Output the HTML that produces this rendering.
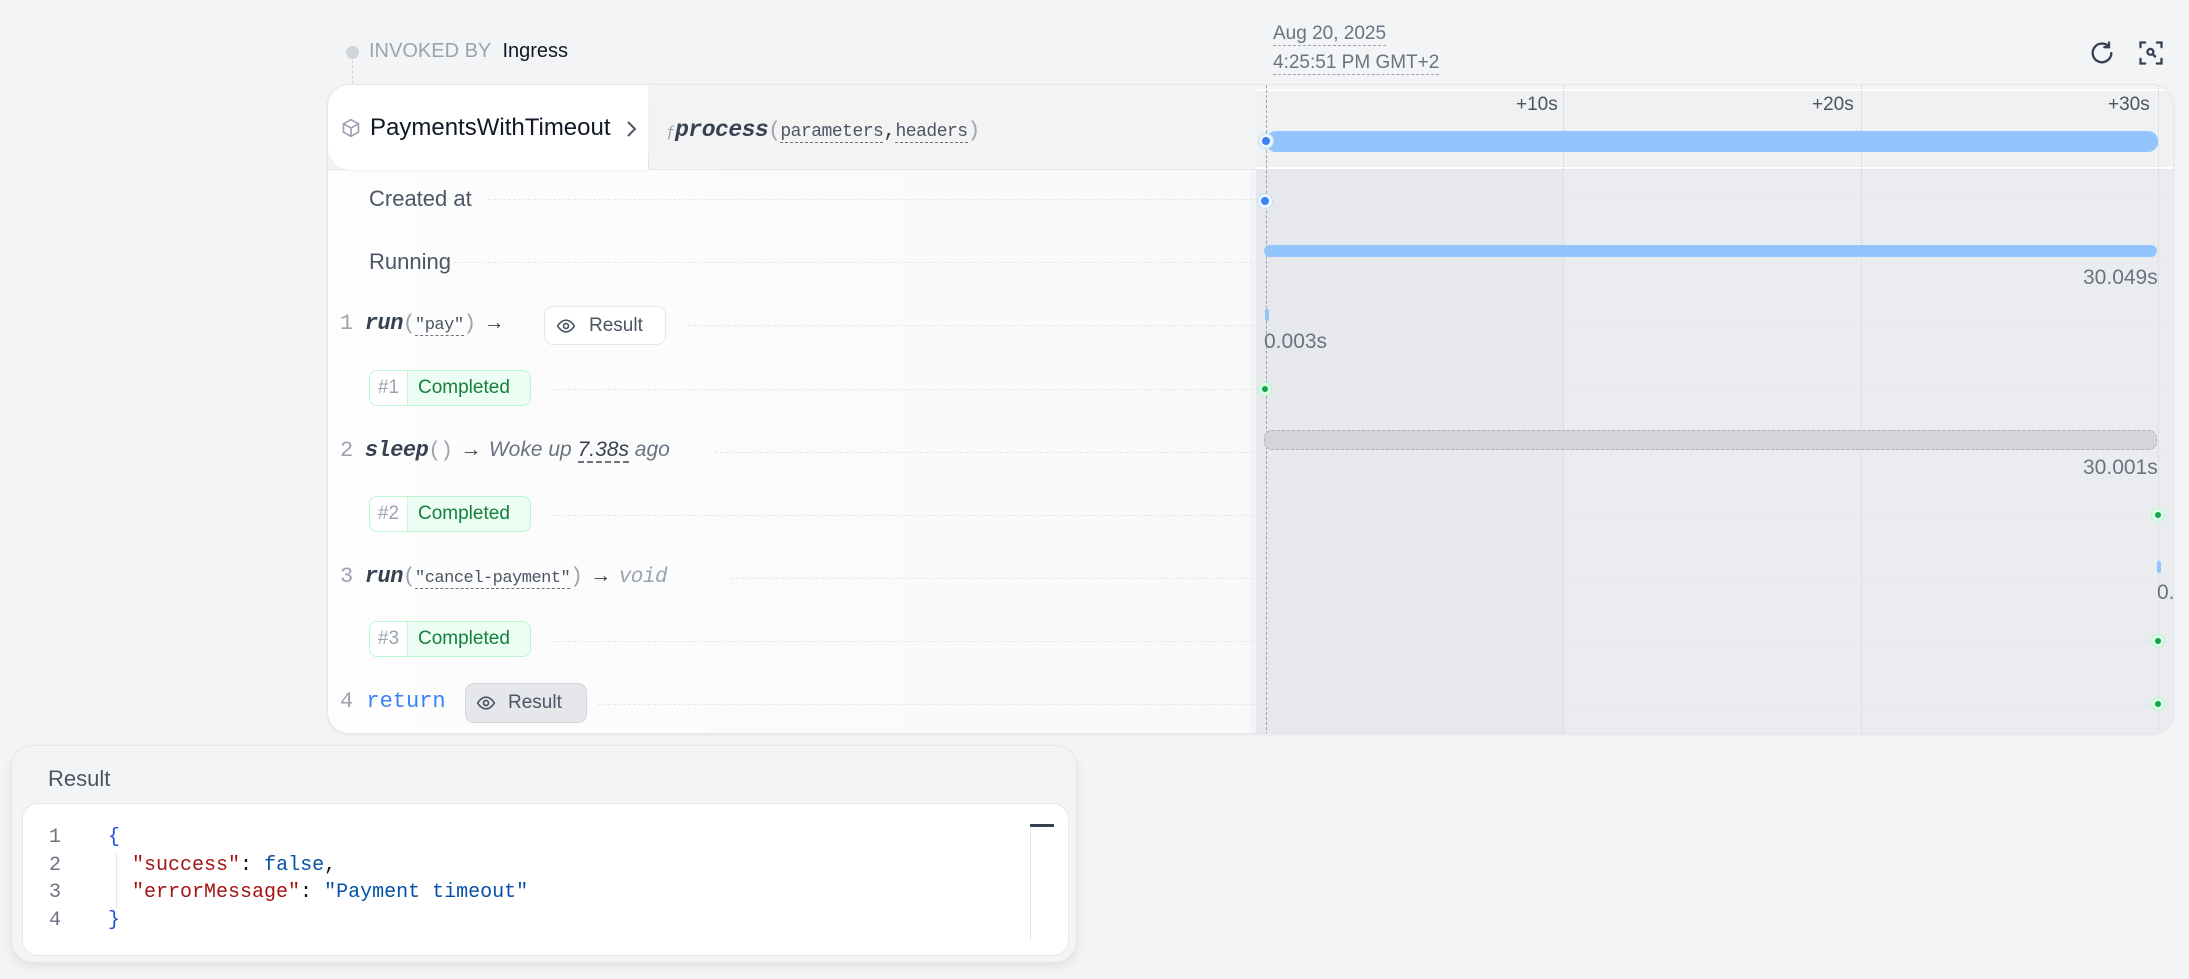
<!DOCTYPE html>
<html><head><meta charset="utf-8"><style>
*{box-sizing:border-box;margin:0;padding:0}
body{width:2189px;height:979px;background:#f3f4f6;font-family:"Liberation Sans",sans-serif;position:relative;overflow:hidden;color:#374151}
.a{position:absolute;white-space:nowrap}
.mono{font-family:"Liberation Mono",monospace}
.row{position:absolute;left:0;right:0;height:1px;border-top:1px dashed #e5e7eb}
.badge{position:absolute;left:369px;height:36px;width:162px;border:1px solid #bbf7d0;border-radius:8px;background:#ecfdf3;overflow:hidden;font-size:19px}
.badge .n{position:absolute;left:0;top:0;bottom:0;width:38px;background:#fff;border-right:1px solid #e5e7eb;color:#9ca3af;text-align:center;line-height:34px}
.badge .t{position:absolute;left:48px;line-height:34px;color:#15803d}
.ln{color:#9ca3af;font-size:22px}
.dot{position:absolute;width:16px;height:16px;border-radius:50%;border:1px solid #bfdbfe;background:#fff;box-shadow:inset 0 0 0 3px #eff6ff}
.dot::after{content:"";position:absolute;left:3px;top:3px;width:8px;height:8px;border-radius:50%;background:#3b82f6}
.gdot{position:absolute;width:14px;height:14px;border-radius:50%;border:1px solid #bbf7d0;background:#dcfce7}
.gdot::after{content:"";position:absolute;left:3px;top:3px;width:6px;height:6px;border-radius:50%;background:#16a34a}
.vg{position:absolute;top:0;height:650px;border-left:1px dotted #cfd1d6}
</style></head><body>
<div class="a" style="left:346px;top:46px;width:13px;height:13px;border-radius:50%;background:#d1d5db"></div>
<div class="a" style="left:352px;top:60px;height:24px;border-left:1px dashed #d1d5db"></div>
<div class="a" style="left:369px;top:40px;font-size:20px;color:#9ca3af">INVOKED BY <span style="color:#111827;margin-left:6px">Ingress</span></div>
<div class="a" style="left:1273px;top:23px;font-size:19px;color:#6b7280;border-bottom:1px dashed #9ca3af;line-height:22px">Aug 20, 2025</div>
<div class="a" style="left:1273px;top:52px;font-size:19px;color:#6b7280;border-bottom:1px dashed #9ca3af;line-height:22px">4:25:51 PM GMT+2</div>
<svg class="a" style="left:2088px;top:39px" width="28" height="28" viewBox="0 0 24 24" fill="none" stroke="#374151" stroke-width="2" stroke-linecap="round"><path d="M20 12a8 8 0 1 1-2.3-5.7"/><path d="M18 3v4h-4"/></svg>
<svg class="a" style="left:2137px;top:39px" width="28" height="28" viewBox="0 0 24 24" fill="none" stroke="#374151" stroke-width="2" stroke-linecap="round"><path d="M3 7V3h4M17 3h4v4M21 17v4h-4M7 21H3v-4"/><circle cx="11.5" cy="11" r="2.5"/><path d="M13.5 13l2 2"/></svg>

<div class="a" style="left:327px;top:84px;width:1847px;height:650px;border-radius:22px;background:#fff;border:1px solid #e5e7eb;overflow:hidden;box-shadow:0 1px 3px rgba(0,0,0,.06)">
  <div class="a" style="left:0;top:85px;width:922px;height:565px;background:linear-gradient(90deg,#fdfdfd,#f8f9fa)"></div>
  <div class="a" style="left:922px;top:0;width:6px;height:650px;background:#f3f4f6"></div>
  <div class="a" style="left:928px;top:0;width:307px;height:650px;background:#e7e8ec"></div>
  <div class="a" style="left:1235px;top:0;width:612px;height:650px;background:#ebecf0"></div>
  <div class="a" style="left:0;top:0;width:1847px;height:85px;background:#f3f4f6;border-bottom:1px solid #e5e7eb"></div>
  <div class="a" style="left:928px;top:4px;width:919px;height:80px;background:#f0f1f3;border-top:2px solid #fff;border-bottom:2px solid #fff"></div>
  <div class="vg" style="left:1235px"></div>
  <div class="vg" style="left:1533px"></div>
  <div class="vg" style="left:1830px"></div>
  <div class="a" style="left:0;top:0;width:320px;height:85px;background:#fff;border-radius:22px 0 0 22px;box-shadow:0 1px 2px rgba(0,0,0,.05)"></div>
  <div class="a" style="left:320px;top:4px;width:602px;height:80px;background:#f3f3f4;clip-path:polygon(4px 0,100% 0,100% 100%,0 100%);border-left:1px solid #ddd"></div>
  <svg class="a" style="left:13px;top:32px" width="20" height="22" viewBox="0 0 24 24" fill="none" stroke="#9ca3af" stroke-width="2"><path d="M12 2l9 5v10l-9 5-9-5V7z"/><path d="M3 7l9 5 9-5M12 12v10"/></svg>
  <div class="a" style="left:42px;top:29px;font-size:24px;color:#111827">PaymentsWithTimeout</div>
  <svg class="a" style="left:296px;top:34px" width="14" height="20" viewBox="0 0 14 20" fill="none" stroke="#4b5563" stroke-width="2"><path d="M4 3l7 7-7 7"/></svg>
  <div class="a mono" style="left:338px;top:32px;font-size:21px;color:#374151;letter-spacing:-0.5px"><span style="color:#9ca3af;font-size:16px">ƒ</span><i style="font-weight:bold;font-size:23px">process</i><span style="color:#9ca3af">(</span><span style="font-size:18px;color:#4b5563;border-bottom:1px dashed #6b7280">parameters</span>,<span style="font-size:18px;color:#4b5563;border-bottom:1px dashed #6b7280">headers</span><span style="color:#9ca3af">)</span></div>
  <div class="a" style="left:1188px;top:9px;font-size:19px;color:#4b5563">+10s</div>
  <div class="a" style="left:1484px;top:9px;font-size:19px;color:#4b5563">+20s</div>
  <div class="a" style="left:1780px;top:9px;font-size:19px;color:#4b5563">+30s</div>
  <div class="a" style="left:938px;top:46px;width:892px;height:21px;border-radius:10px;background:#93c5fd"></div>
  <div class="row" style="top:114px;left:160px"></div>
  <div class="row" style="top:177px;left:125px"></div>
  <div class="row" style="top:240px;left:360px"></div>
  <div class="row" style="top:304px;left:225px"></div>
  <div class="row" style="top:367px;left:387px"></div>
  <div class="row" style="top:430px;left:225px"></div>
  <div class="row" style="top:493px;left:403px"></div>
  <div class="row" style="top:556px;left:225px"></div>
  <div class="row" style="top:619px;left:270px"></div>
  <div class="a" style="left:938px;top:0;height:650px;border-left:1px dashed #9ca3af"></div>
  <div class="dot" style="left:930px;top:48px"></div>
</div>
<div class="a" style="left:369px;top:186px;font-size:22px;color:#4b5563">Created at</div>
<div class="a" style="left:369px;top:249px;font-size:22px;color:#4b5563">Running</div>
<div class="a mono" style="left:340px;top:311px;font-size:21px;letter-spacing:-0.5px"><span class="ln">1</span> <i style="font-weight:bold;color:#374151;font-size:22px">run</i><span style="color:#9ca3af">(</span><span style="font-size:17px;color:#4b5563;border-bottom:1px dashed #6b7280">"pay"</span><span style="color:#9ca3af">)</span> →</div>
<div class="a" style="left:544px;top:306px;width:122px;height:39px;border:1px solid #e5e7eb;border-radius:9px;background:#fff;font-size:19px;color:#4b5563;line-height:37px;padding-left:44px">Result</div>
<svg class="a" style="left:556px;top:316px" width="20" height="20" viewBox="0 0 24 24" fill="none" stroke="#4b5563" stroke-width="2"><path d="M2 12s4-7 10-7 10 7 10 7-4 7-10 7S2 12 2 12z"/><circle cx="12" cy="12" r="3"/></svg>
<div class="badge" style="top:370px"><span class="n">#1</span><span class="t">Completed</span></div>
<div class="a mono" style="left:340px;top:438px;font-size:21px;letter-spacing:-0.5px"><span class="ln">2</span> <i style="font-weight:bold;color:#374151;font-size:22px">sleep</i><span style="color:#9ca3af">()</span> → <i style="font-family:'Liberation Sans';color:#6b7280;letter-spacing:0">Woke up <b style="color:#374151;border-bottom:2px dashed #6b7280;font-weight:normal">7.38s</b> ago</i></div>
<div class="badge" style="top:496px"><span class="n">#2</span><span class="t">Completed</span></div>
<div class="a mono" style="left:340px;top:564px;font-size:21px;letter-spacing:-0.5px"><span class="ln">3</span> <i style="font-weight:bold;color:#374151;font-size:22px">run</i><span style="color:#9ca3af">(</span><span style="font-size:17px;color:#4b5563;border-bottom:1px dashed #6b7280">"cancel-payment"</span><span style="color:#9ca3af">)</span> → <i style="color:#9ca3af">void</i></div>
<div class="badge" style="top:621px"><span class="n">#3</span><span class="t">Completed</span></div>
<div class="a mono" style="left:340px;top:689px;font-size:22px"><span class="ln">4</span> <span style="color:#3b82f6">return</span></div>
<div class="a" style="left:465px;top:683px;width:122px;height:40px;border:1px solid #d1d5db;border-radius:9px;background:#e5e7eb;font-size:19px;color:#4b5563;line-height:38px;padding-left:42px">Result</div>
<svg class="a" style="left:476px;top:693px" width="20" height="20" viewBox="0 0 24 24" fill="none" stroke="#4b5563" stroke-width="2"><path d="M2 12s4-7 10-7 10 7 10 7-4 7-10 7S2 12 2 12z"/><circle cx="12" cy="12" r="3"/></svg>
<div class="dot" style="left:1257px;top:193px"></div>
<div class="a" style="left:1264px;top:245px;width:893px;height:12px;border-radius:6px;background:#93c5fd"></div>
<div class="a" style="left:2083px;top:266px;font-size:21px;color:#6b7280">30.049s</div>
<div class="a" style="left:1265px;top:309px;width:4px;height:12px;border-radius:2px;background:#93c5fd"></div>
<div class="a" style="left:1264px;top:330px;font-size:21px;color:#6b7280">0.003s</div>
<div class="gdot" style="left:1258px;top:382px"></div>
<div class="a" style="left:1264px;top:430px;width:893px;height:20px;border-radius:8px;background:#d4d5da;border:1px dashed #b3b5bb"></div>
<div class="a" style="left:2083px;top:456px;font-size:21px;color:#6b7280">30.001s</div>
<div class="gdot" style="left:2151px;top:508px"></div>
<div class="a" style="left:2157px;top:561px;width:4px;height:12px;border-radius:2px;background:#93c5fd"></div>
<div class="a" style="left:2157px;top:581px;font-size:21px;color:#6b7280">0.</div>
<div class="gdot" style="left:2151px;top:634px"></div>
<div class="gdot" style="left:2151px;top:697px"></div>

<div class="a" style="left:11px;top:745px;width:1066px;height:218px;border-radius:22px;background:#f3f4f6;border:1px solid #e5e7eb;box-shadow:0 4px 10px rgba(0,0,0,.08)">
  <div class="a" style="left:36px;top:20px;font-size:22px;color:#4b5563">Result</div>
  <div class="a" style="left:10px;top:57px;width:1047px;height:153px;border-radius:16px;background:#fff;border:1px solid #e5e7eb">
    <div class="a mono" style="left:26px;top:20px;font-size:20px;line-height:27.5px;color:#6b7280">1<br>2<br>3<br>4</div>
    <div class="a" style="left:93px;top:49px;height:55px;border-left:1px solid #e5e7eb"></div>
    <div class="a mono" style="left:85px;top:20px;font-size:20px;line-height:27.5px;color:#111">
      <span style="color:#1d4ed8">{</span><br>
      &nbsp;&nbsp;<span style="color:#a31515">"success"</span>: <span style="color:#0451a5">false</span>,<br>
      &nbsp;&nbsp;<span style="color:#a31515">"errorMessage"</span>: <span style="color:#0451a5">"Payment timeout"</span><br>
      <span style="color:#1d4ed8">}</span></div>
    <div class="a" style="left:1007px;top:20px;width:24px;height:3px;background:#374151"></div>
    <div class="a" style="left:1007px;top:25px;height:112px;border-left:1px solid #e5e7eb"></div>
  </div>
</div>
</body></html>
